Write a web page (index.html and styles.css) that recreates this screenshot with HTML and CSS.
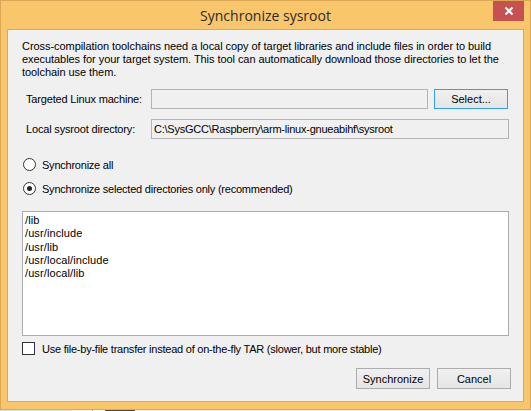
FILE: index.html
```html
<!DOCTYPE html>
<html lang="en">
<head>
<meta charset="utf-8">
<title>Synchronize sysroot</title>
<link rel="stylesheet" href="styles.css">
</head>
<body>
<div class="window">
  <div class="titlebar">
    <span class="title">Synchronize sysroot</span>
    <button class="close" type="button" aria-label="Close">
      <svg width="10" height="10" viewBox="0 0 10 10"><path d="M1.5 1.5L8.5 8.5M8.5 1.5L1.5 8.5" stroke="#fff" stroke-width="2.2" fill="none"/></svg>
    </button>
  </div>
  <div class="client">
    <p class="intro">Cross-compilation toolchains need a local copy of target libraries and include files in order to build<br>executables for your target system. This tool can automatically download those directories to let the<br>toolchain use them.</p>

    <div class="field-row">
      <span class="label">Targeted Linux machine:</span>
      <span class="field field-machine"></span>
      <button class="btn btn-focus" type="button">Select...</button>
    </div>
    <div class="field-row field-row-second">
      <span class="label">Local sysroot directory:</span>
      <span class="field field-path">C:\SysGCC\Raspberry\arm-linux-gnueabihf\sysroot</span>
    </div>

    <div class="options">
      <div class="option"><span class="radio"></span><span class="opt-text">Synchronize all</span></div>
      <div class="option"><span class="radio checked"></span><span class="opt-text">Synchronize selected directories only (recommended)</span></div>
    </div>

    <div class="listbox">
      <div>/lib</div>
      <div>/usr/include</div>
      <div>/usr/lib</div>
      <div>/usr/local/include</div>
      <div>/usr/local/lib</div>
    </div>

    <div class="check-row"><span class="checkbox"></span><span class="opt-text">Use file-by-file transfer instead of on-the-fly TAR (slower, but more stable)</span></div>

    <div class="actions">
      <button class="btn" type="button">Synchronize</button>
      <button class="btn" type="button">Cancel</button>
    </div>
  </div>
</div>
</body>
</html>
```
FILE: styles.css
```css
* { box-sizing: border-box; }

html, body { margin: 0; padding: 0; }

body {
  width: 531px;
  height: 411px;
  overflow: hidden;
  font-family: "Liberation Sans", Arial, sans-serif;
  font-size: 11px;
  color: #000;
  /* desktop peeking out under the dialog */
  background: linear-gradient(to right,
    #cfe8ee 0 72px, #f7f7f7 72px 92px, #9a9a9a 92px 93px,
    #ffffff 93px 105px, #4a4a4a 105px 135px, #f0f0f0 135px);
}

.window {
  position: relative;
  width: 531px;
  height: 410px;
  border: 1px solid #dba855;
  background: #f9c66c;
  padding: 0 6px 7px;
  display: flex;
  flex-direction: column;
}

.titlebar {
  height: 28px;
  display: flex;
  align-items: center;
  justify-content: center;
}

.title {
  font-family: "Open Sans", "Noto Sans", sans-serif;
  font-size: 14px;
  color: #2b2b2b;
  margin-top: 1px;
}

.close {
  position: absolute;
  top: 0;
  right: 6px;
  width: 31px;
  height: 20px;
  border: 0;
  padding: 0;
  background: #c75050;
  display: flex;
  align-items: center;
  justify-content: center;
}

.close svg { display: block; }

.client {
  flex: 1;
  border: 1px solid #dba855;
  background: #f0f0f0;
  padding: 10px 12px 12px 14px;
  display: flex;
  flex-direction: column;
}

.intro {
  margin: 0 0 10px;
  line-height: 13px;
  white-space: nowrap;
  letter-spacing: -0.06px;
}

.field-row {
  display: flex;
  align-items: flex-start;
  height: 20px;
  padding-left: 4px;
}

.field-row-second { margin-top: 10px; }

.label {
  width: 125px;
  line-height: 20px;
  flex: none;
  letter-spacing: -0.17px;
}

.field {
  height: 20px;
  border: 1px solid #b4b4b4;
  background: #f0f0f0;
  padding-left: 2px;
  line-height: 18px;
  white-space: nowrap;
  flex: none;
}

.field-machine { width: 277px; margin-right: 6px; }
.field-path { width: 358px; letter-spacing: -0.23px; }

.btn {
  width: 74px;
  height: 21px;
  border: 1px solid #acacac;
  background: linear-gradient(#f0f0f0, #e5e5e5);
  font-family: inherit;
  font-size: 11px;
  color: #000;
  padding: 0;
  flex: none;
}

.btn-focus {
  height: 20px;
  border-color: #2f9fef;
}

.options {
  margin-top: 19px;
  display: flex;
  flex-direction: column;
  gap: 11px;
  padding-left: 1px;
}

.option, .check-row {
  display: flex;
  align-items: center;
  height: 13px;
  gap: 6px;
}

.opt-text {
  white-space: nowrap;
  letter-spacing: -0.23px;
}

.radio {
  width: 13px;
  height: 13px;
  border-radius: 50%;
  border: 1px solid #333;
  background: #fff;
  flex: none;
  display: flex;
  align-items: center;
  justify-content: center;
}

.radio.checked::after {
  content: "";
  width: 5px;
  height: 5px;
  border-radius: 50%;
  background: #222;
}

.listbox {
  margin-top: 16px;
  width: 487px;
  height: 125px;
  border: 1px solid #abadb3;
  background: #fff;
  padding: 2px 2px;
  line-height: 13.3px;
  letter-spacing: 0.1px;
}

.check-row {
  margin-top: 6px;
  gap: 7px;
}

.checkbox {
  width: 13px;
  height: 13px;
  border: 1px solid #333;
  background: #fff;
  flex: none;
}

.actions {
  margin-top: 13px;
  display: flex;
  justify-content: flex-end;
  gap: 7px;
}
```
